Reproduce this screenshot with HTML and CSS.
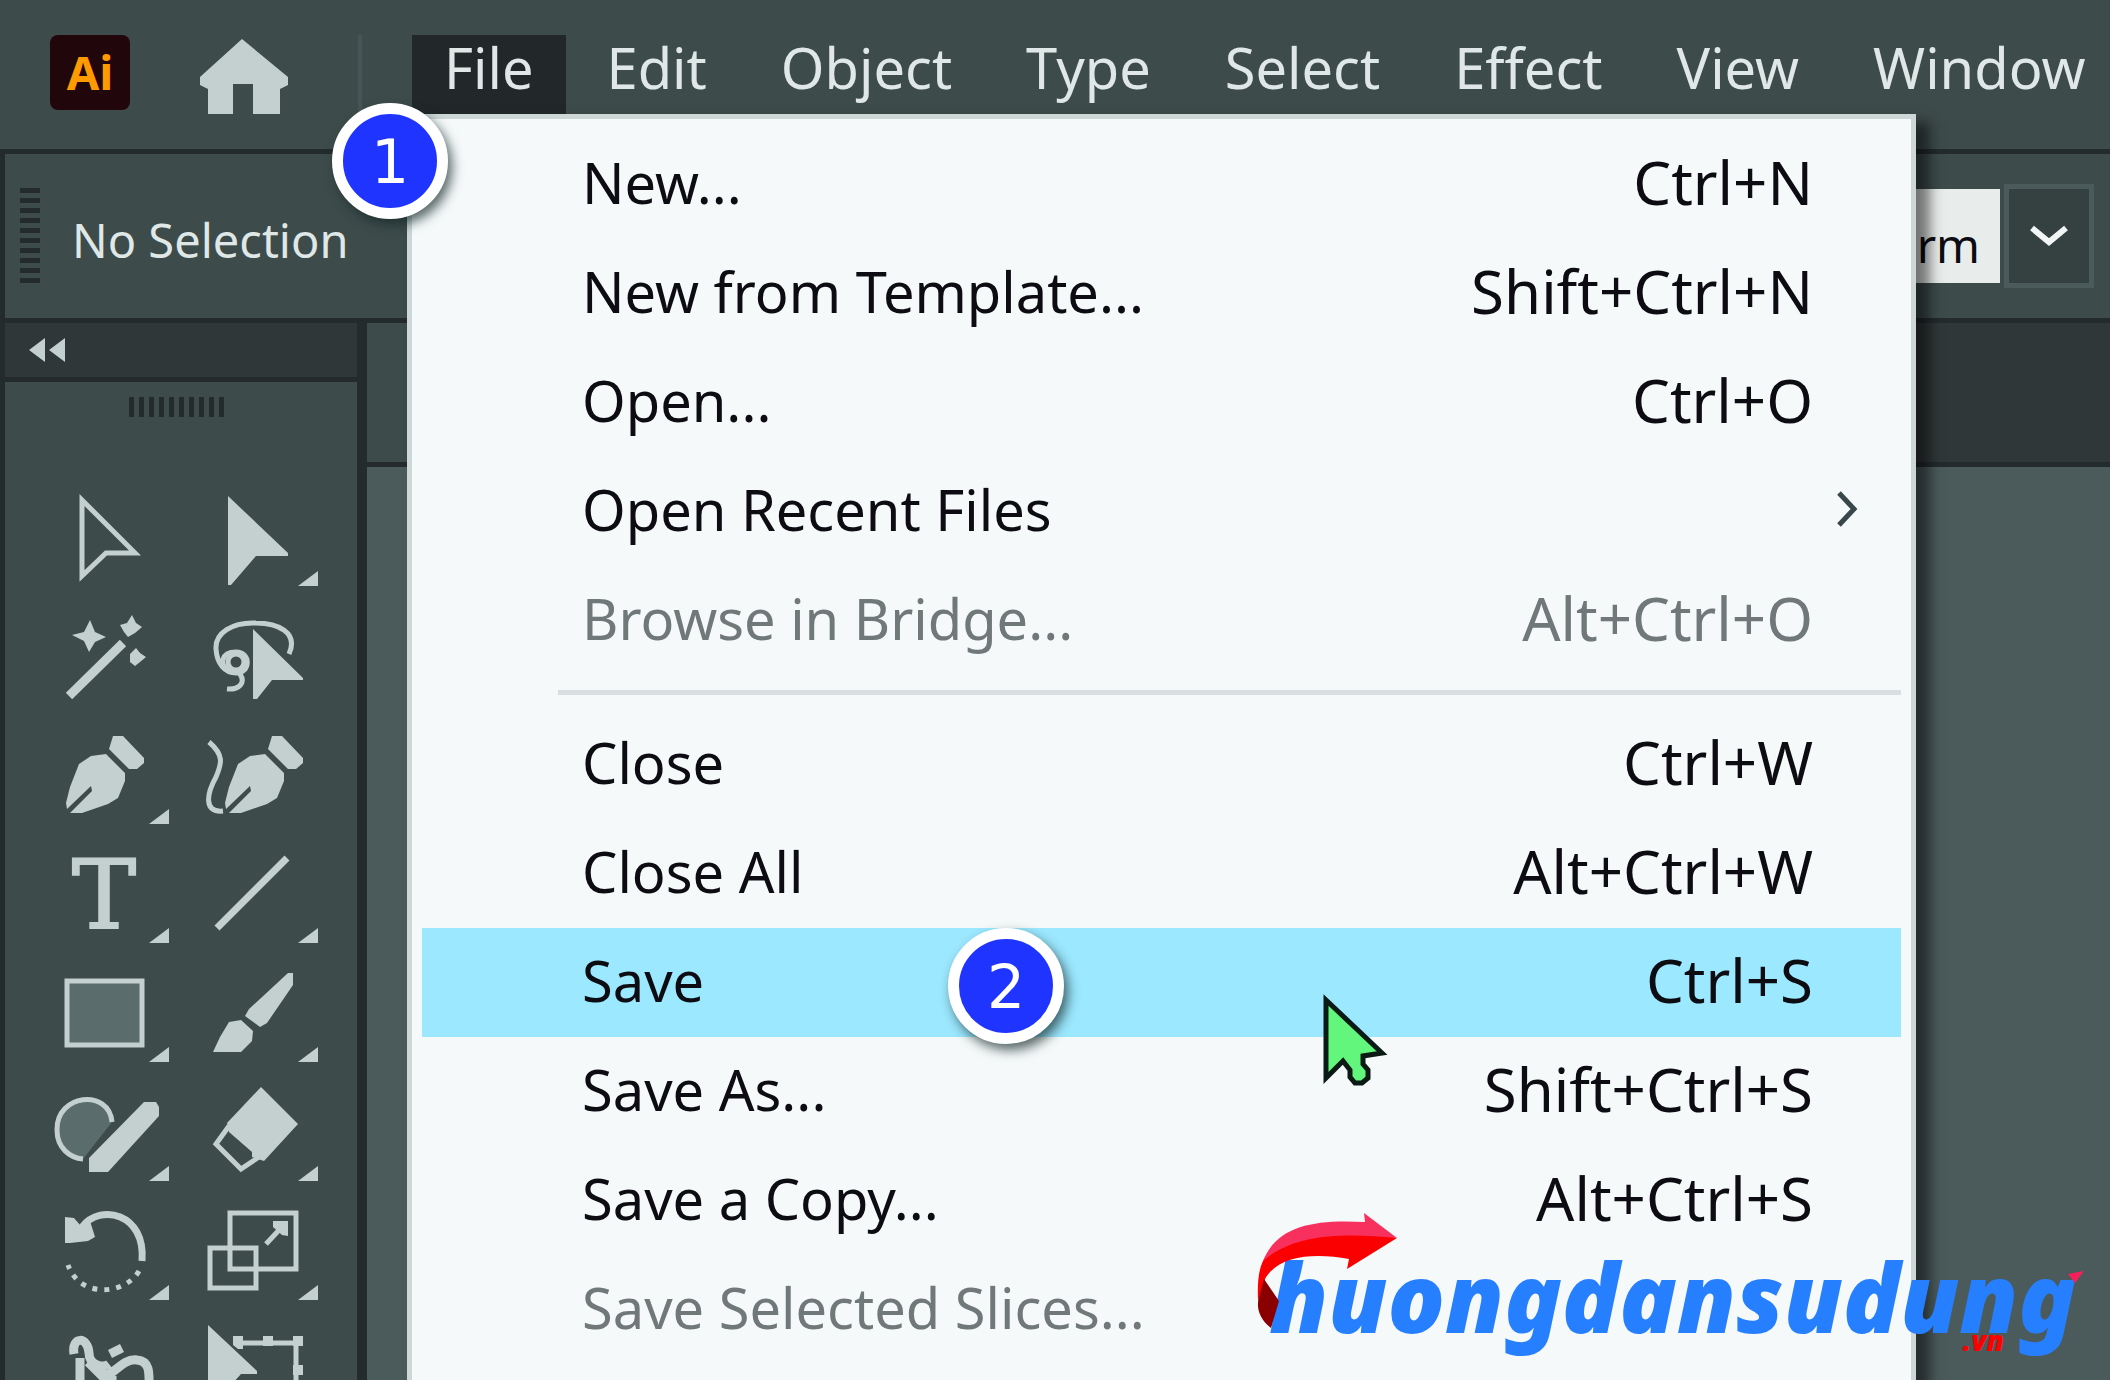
FILE: index.html
```html
<!DOCTYPE html>
<html lang="en">
    <head>
        <meta charset="utf-8">
        <title>File menu</title>
        <meta name="viewport" content="width=device-width, initial-scale=1.0">
        <link rel="stylesheet" href="styles.css">
    </head>
    <body>
        <header class="menubar">
            <div class="logo">Ai</div>
            <a class="home" href="#" aria-label="Home">
                <svg width="88" height="75" viewBox="0 0 88 75"><path d="M42 0L88 38V46L80 50V75H53V45H33V75H8V50L0 46V38Z"/></svg>
            </a>
            <nav class="menus">
                <div class="menu">
                    <button class="menu-btn open">File</button>
                    <span class="badge badge-one">1</span>
                    <ul class="dropdown">
                        <li><button class="item"><span>New...</span><kbd>Ctrl+N</kbd></button></li>
                        <li><button class="item"><span>New from Template...</span><kbd>Shift+Ctrl+N</kbd></button></li>
                        <li><button class="item"><span>Open...</span><kbd>Ctrl+O</kbd></button></li>
                        <li>
                            <button class="item sub"><span>Open Recent Files</span>
                                <svg class="arrow" width="22" height="36" viewBox="0 0 22 36"><path d="M3 2L18 18L3 34"/></svg>
                            </button>
                        </li>
                        <li><button class="item" disabled><span>Browse in Bridge...</span><kbd>Alt+Ctrl+O</kbd></button></li>
                        <li class="sep"></li>
                        <li><button class="item"><span>Close</span><kbd>Ctrl+W</kbd></button></li>
                        <li><button class="item"><span>Close All</span><kbd>Alt+Ctrl+W</kbd></button></li>
                        <li class="current">
                            <button class="item"><span>Save</span><kbd>Ctrl+S</kbd></button>
                            <span class="badge badge-two">2</span>
                            <svg class="cursor" width="64" height="92" viewBox="0 0 64 92"><path d="M3 4L59 57L40 60V68L45 74V82L39 87H32L27 81V74L20 65L3 82Z"/></svg>
                        </li>
                        <li><button class="item"><span>Save As...</span><kbd>Shift+Ctrl+S</kbd></button></li>
                        <li><button class="item"><span>Save a Copy...</span><kbd>Alt+Ctrl+S</kbd></button></li>
                        <li><button class="item" disabled><span>Save Selected Slices...</span></button></li>
                    </ul>
                </div>
                <button class="menu-btn">Edit</button>
                <button class="menu-btn">Object</button>
                <button class="menu-btn">Type</button>
                <button class="menu-btn">Select</button>
                <button class="menu-btn">Effect</button>
                <button class="menu-btn">View</button>
                <button class="menu-btn">Window</button>
            </nav>
        </header>

        <div class="control">
            <span class="grip-v"></span>
            <span class="status">No Selection</span>
            <input class="profile" type="text" value="Uniform" aria-label="Profile">
            <button class="drop" aria-label="Choose profile">
                <svg width="40" height="24" viewBox="0 0 40 24"><path d="M3 4L20 18L37 4"/></svg>
            </button>
        </div>

        <main class="work">
            <aside class="tools">
                <button class="collapse" aria-label="Collapse panel">
                    <svg width="38" height="26" viewBox="0 0 38 26"><path d="M16 1V25L0 13ZM36 1V25L20 13Z"/></svg>
                </button>
                <div class="grip-h"></div>
                <div class="grid">
                    <button class="tool" aria-label="Direct selection">
                        <svg viewBox="0 0 149 119"><path class="line" d="M62 33L115 86H86L62 109Z"/></svg>
                    </button>
                    <button class="tool more" aria-label="Group selection">
                        <svg viewBox="0 0 149 119"><path d="M59 29L119 86V89H87L62 118H59Z"/></svg>
                    </button>
                    <button class="tool" aria-label="Magic wand">
                        <svg viewBox="0 0 149 119">
                            <path class="line thick" d="M49 110L103 57"/>
                            <path d="M70 34L75 46L86 51L75 56L69 66L64 55L52 49L64 46ZM112 29L116 37L122 41L115 47L108 51L104 46L100 39L107 37ZM116 62L120 67L126 71L120 76L115 80L110 76V68Z"/>
                        </svg>
                    </button>
                    <button class="tool" aria-label="Lasso">
                        <svg viewBox="0 0 149 119">
                            <path class="line" d="M120 68C130 46 108 37 87 37C63 36 46 47 47 63C48 78 56 87 67 87C82 87 82 66 67 66C52 66 50 79 60 85M71 88C77 97 70 104 58 103"/>
                            <circle class="line" cx="67" cy="76" r="8"/>
                            <path d="M84 43L134 92V94H103L88 113H84Z"/>
                        </svg>
                    </button>
                    <button class="tool more" aria-label="Pen">
                        <svg viewBox="0 0 149 119">
                            <path d="M93 31H103L124 53V58L117 64H109L89 44ZM71 51L86 49L105 68V76L98 93L88 99L62 108H50L72 86L71 81L47 104L46 98L50 82L59 59Z"/>
                        </svg>
                    </button>
                    <button class="tool" aria-label="Curvature">
                        <svg viewBox="0 0 149 119">
                            <path class="line" d="M40 37C55 50 53 58 47 72C38 88 34 108 54 106"/>
                            <path transform="translate(10 0)" d="M93 31H103L124 53V58L117 64H109L89 44ZM71 51L86 49L105 68V76L98 93L88 99L62 108H50L72 86L71 81L47 104L46 98L50 82L59 59Z"/>
                        </svg>
                    </button>
                    <button class="tool more" aria-label="Type">
                        <svg viewBox="0 0 149 119"><text class="type" x="84" y="104" text-anchor="middle">T</text></svg>
                    </button>
                    <button class="tool more" aria-label="Line segment">
                        <svg viewBox="0 0 149 119"><path class="line mid" d="M48 104L118 34"/></svg>
                    </button>
                    <button class="tool more" aria-label="Rectangle">
                        <svg viewBox="0 0 149 119"><rect class="line tint" x="47" y="38" width="75" height="64"/></svg>
                    </button>
                    <button class="tool more" aria-label="Paintbrush">
                        <svg viewBox="0 0 149 119"><path d="M119 30H124V42L98 80L91 84L76 73L80 66ZM60 79L72 77L84 88L83 98L72 109H44L51 94Z"/></svg>
                    </button>
                    <button class="tool more" aria-label="Shaper">
                        <svg viewBox="0 0 149 119">
                            <path class="line tint" d="M92 60C89 26 36 32 37 68C37 86 50 96 63 97"/>
                            <path d="M124 40H136L139 45V54L88 110H69V96Z"/>
                        </svg>
                    </button>
                    <button class="tool more" aria-label="Eraser">
                        <svg viewBox="0 0 149 119">
                            <path d="M92 25L129 62L95 99L83 95V90L60 70L58 61Z"/>
                            <path class="line" d="M60 64L47 82L72 107L90 95"/>
                        </svg>
                    </button>
                    <button class="tool more" aria-label="Rotate">
                        <svg viewBox="0 0 149 119">
                            <path class="line mid" d="M62 46C80 22 126 32 122 80"/>
                            <path class="line" stroke-dasharray="5 7" d="M119 90C105 114 60 118 48 84"/>
                            <path d="M45 36L54 37L60 44L70 40L75 56L68 60L50 62H45Z"/>
                        </svg>
                    </button>
                    <button class="tool more" aria-label="Scale">
                        <svg viewBox="0 0 149 119">
                            <path class="line" d="M61 32H127V88H61ZM41 67H87V107H41ZM97 63L112 47"/>
                            <path d="M104 40H119V55L113 54L104 46Z"/>
                        </svg>
                    </button>
                    <button class="tool" aria-label="Puppet warp">
                        <svg viewBox="0 0 149 119">
                            <path class="line thick" d="M54 54C51 36 68 36 69 53C69 66 84 68 89 64M90 54L102 48M60 58V90M80 80C95 74 103 58 117 60C131 61 129 75 129 90M68 62L90 84M84 70V90M92 76V90"/>
                        </svg>
                    </button>
                    <button class="tool" aria-label="Free transform">
                        <svg viewBox="0 0 149 119">
                            <path d="M39 25L88 71V74H72L39 110ZM64 36H74V49H69L64 45ZM94 36H104V46H94ZM124 36H134V46H124ZM124 65H134V75H124Z"/>
                            <path class="line" d="M70 43H127V110"/>
                        </svg>
                    </button>
                </div>
            </aside>
            <section class="document">
                <div class="tabs"><div class="tab"></div></div>
                <div class="canvas"></div>
            </section>
        </main>

        <div class="brand">
            <svg class="swoosh" width="142" height="118" viewBox="0 0 142 118">
                <path fill="#fb0000" d="M142 27L92 58L94 48C62 42 24 43 10 68L3 90C2 65 5 52 12 44C30 18 90 15 142 27Z"/>
                <path fill="#f8305e" d="M8 50C22 15 58 8 110 11L109 2L142 27C90 22 40 22 8 50Z"/>
                <path fill="#8a0000" d="M9 68L24 90L16 117C4 108 1 96 4 86Z"/>
            </svg>
            <span class="brand-name">huongdansudung</span>
            <svg class="tip" width="16" height="12" viewBox="0 0 16 12"><path fill="#f8205a" d="M0 3L16 0L7 12Z"/></svg>
            <span class="brand-tld">.vn</span>
        </div>
    </body>
</html>
```
FILE: styles.css
```css
*{box-sizing:border-box}
body{margin:0; height:100vh; overflow:hidden; display:flex; flex-direction:column; background-color:#4b5a5b; color:#dfe8e6; font-family:"Noto Sans","Open Sans",sans-serif; font-size:56px}
button,input{font:inherit; color:inherit; border:0; padding:0; margin:0; background:none; border-radius:0}
svg{display:block; overflow:visible}

.menubar{flex:none; display:flex; align-items:flex-start; height:154px; padding:35px 0 0 50px; background-color:#3e4b4b; border-bottom:5px solid #242b2d}
.logo{flex:none; width:80px; height:75px; border-radius:8px; background-color:#21060b; color:#ff9a00; font-size:47px; font-weight:700; line-height:74px; text-align:center}
.home{flex:none; margin:4px 0 0 70px}
.home svg{fill:#c3d0cf}
.menus{display:flex; gap:8px; margin-left:70px; padding-left:50px; border-left:4px solid #475556}
.menu{position:relative}
.menu-btn{display:block; height:79px; padding:0 33px 14px; line-height:65px; white-space:nowrap}
.menu-btn.open{padding:0 32px 14px; background-color:#22282a}

.dropdown{position:absolute; z-index:2; top:79px; left:-5px; width:1509px; margin:0; padding:11px 10px 40px; list-style:none; background-color:#f5f9fa; border:5px solid #cdd8d6; color:#0c0c12; box-shadow:14px 8px 12px rgba(0,0,0,.5)}
.dropdown li{position:relative}
.item{display:flex; width:100%; height:109px; padding:0 88px 5px 160px; align-items:center; justify-content:space-between; text-align:left; white-space:nowrap}
.item:disabled{color:#70787a}
.item kbd{font-family:inherit; font-size:60px}
.item.sub{padding-right:43px}
.arrow{fill:none; stroke:#39464a; stroke-width:5}
.dropdown .sep{height:5px; margin:15px 0 15px 136px; background-color:#d9dfe0}
.current{background-color:#9ce8ff}

.badge{position:absolute; z-index:3; width:116px; height:116px; border:11px solid #fff; border-radius:50%; background-color:#1f35ff; color:#fff; font-family:"DejaVu Sans",sans-serif; font-size:60px; line-height:96px; text-align:center; box-shadow:4px 6px 12px rgba(20,40,40,.7)}
.badge-one{top:68px; left:-80px}
.badge-two{top:0; left:526px}
.cursor{position:absolute; z-index:3; top:68px; left:901px; fill:#62f67c; stroke:#0b1a14; stroke-width:5}

.control{flex:none; display:flex; align-items:center; height:169px; padding:0 16px 0 15px; background-color:#3e4b4b; border-left:5px solid #242b2d; border-bottom:5px solid #242b2d; font-size:47px}
.grip-v{width:20px; height:96px; background:repeating-linear-gradient(#242b2d 0 5px,transparent 5px 10px)}
.status{margin-left:32px; padding-top:8px}
.profile{width:260px; height:94px; margin-left:auto; padding:18px 20px 0 0; background-color:#e8eceb; color:#0c0c12; text-align:right}
.drop{display:flex; align-items:center; justify-content:center; width:90px; height:104px; margin-left:4px; background-color:#354041; border:5px solid #4b5a5b}
.drop svg{fill:none; stroke:#f1f6f5; stroke-width:6}

.work{flex:1; min-height:0; display:flex}
.tools{flex:none; width:362px; background-color:#3e4b4b; border-left:5px solid #242b2d; border-right:5px solid #242b2d; overflow:hidden}
.collapse{display:flex; align-items:center; width:100%; height:59px; padding-left:24px; background-color:#2f3738; border-bottom:5px solid #242b2d}
.collapse svg{fill:#c3d0cf}
.grip-h{width:95px; height:20px; margin:15px 0 50px 124px; background:repeating-linear-gradient(90deg,#242b2d 0 5px,transparent 5px 10px)}
.grid{display:grid; grid-template-columns:149px 149px; grid-auto-rows:119px; padding-left:15px}
.tool{position:relative; display:block}
.tool svg{width:149px; height:119px; fill:#c3d0cf}
.tool .line{fill:none; stroke:#c3d0cf; stroke-width:5}
.tool .mid{stroke-width:7}
.tool .thick{stroke-width:9}
.tool .tint{fill:#5a6c6b}
.tool .type{font-family:"DejaVu Serif",serif; font-size:96px; stroke:#c3d0cf; stroke-width:2}
.more:after{content:""; position:absolute; right:0; bottom:0; border-left:20px solid transparent; border-bottom:15px solid #c3d0cf}

.document{flex:1; display:flex; flex-direction:column; border-left:5px solid #242b2d}
.tabs{flex:none; height:144px; background-color:#2f3738; border-bottom:5px solid #242b2d}
.tab{width:400px; height:100%; background-color:#3e4b4b}
.canvas{flex:1; background-color:#4b5a5b}

.brand{position:absolute; z-index:4; right:26px; bottom:36px; font-family:"Noto Sans","Open Sans",sans-serif; font-style:italic; font-weight:900; line-height:1; white-space:nowrap}
.brand-name{display:block; padding-right:8px; color:#267fff; font-size:95px}
.brand-tld{position:absolute; right:80px; bottom:-10px; color:#f00; font-size:28px}
.swoosh{position:absolute; left:-14px; top:-38px}
.tip{position:absolute; right:0; top:22px}
```
